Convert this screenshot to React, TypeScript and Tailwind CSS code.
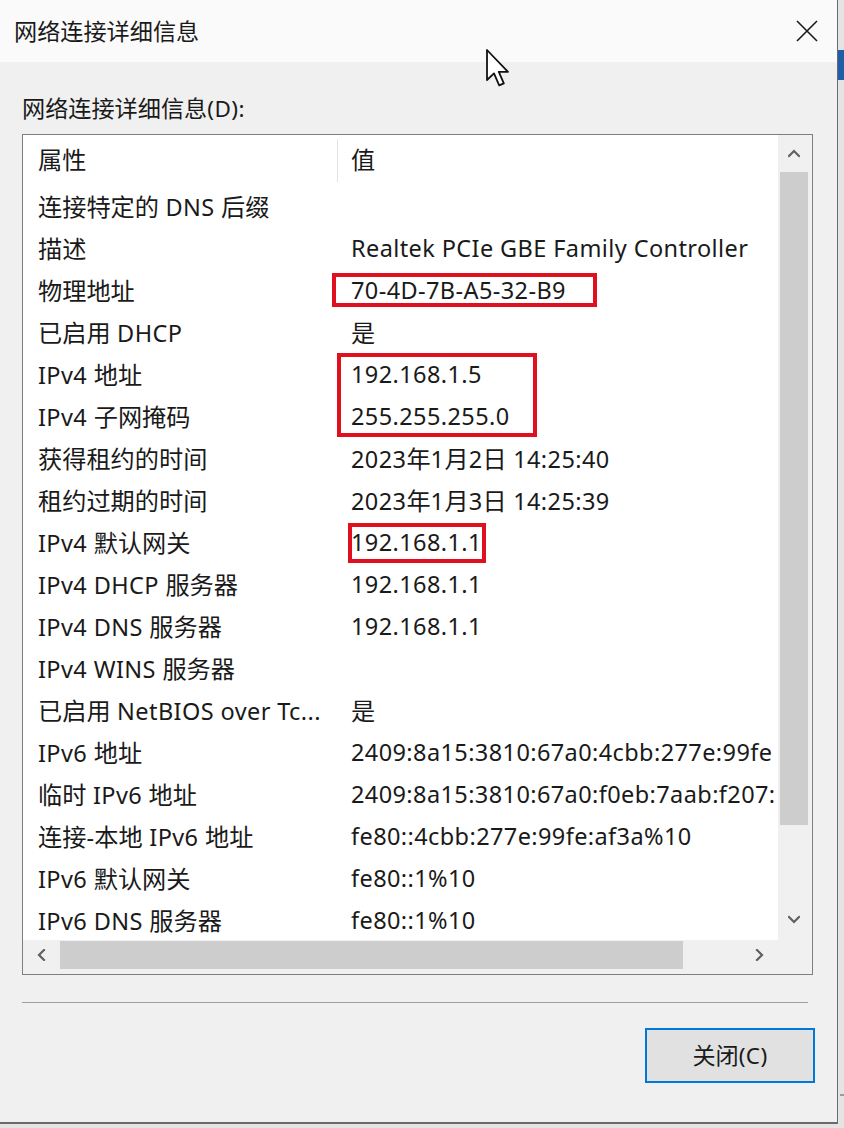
import React from 'react';

const rows: [string, string][] = [
    ['连接特定的 DNS 后缀', ''],
    ['描述', 'Realtek PCIe GBE Family Controller'],
    ['物理地址', '70-4D-7B-A5-32-B9'],
    ['已启用 DHCP', '是'],
    ['IPv4 地址', '192.168.1.5'],
    ['IPv4 子网掩码', '255.255.255.0'],
    ['获得租约的时间', '2023年1月2日 14:25:40'],
    ['租约过期的时间', '2023年1月3日 14:25:39'],
    ['IPv4 默认网关', '192.168.1.1'],
    ['IPv4 DHCP 服务器', '192.168.1.1'],
    ['IPv4 DNS 服务器', '192.168.1.1'],
    ['IPv4 WINS 服务器', ''],
    ['已启用 NetBIOS over Tc...', '是'],
    ['IPv6 地址', '2409:8a15:3810:67a0:4cbb:277e:99fe'],
    ['临时 IPv6 地址', '2409:8a15:3810:67a0:f0eb:7aab:f207:'],
    ['连接-本地 IPv6 地址', 'fe80::4cbb:277e:99fe:af3a%10'],
    ['IPv6 默认网关', 'fe80::1%10'],
    ['IPv6 DNS 服务器', 'fe80::1%10'],
];

// CJK glyphs in the screenshot run a bit larger than the latin ones
const T: React.FC<{ text: string }> = ({ text }) => {
    const parts = text.split(/([\u3000-\u9fff\uff00-\uffef]+)/);
    return (
        <>
            {parts.map((p, i) =>
                /[\u3000-\u9fff\uff00-\uffef]/.test(p) ? (
                    <span key={i} className="text-[1.03em] tracking-normal">{p}</span>
                ) : (
                    <span key={i}>{p}</span>
                )
            )}
        </>
    );
};

const Chevron: React.FC<{ dir: 'up' | 'down' | 'left' | 'right' }> = ({ dir }) => {
    const d = {
        up: 'M1 8 L6 3 L11 8',
        down: 'M1 3 L6 8 L11 3',
        left: 'M8 1 L3 6 L8 11',
        right: 'M3 1 L8 6 L3 11',
    }[dir];
    return (
        <svg width="12" height="12" viewBox="0 0 12 12" fill="none">
            <path d={d} stroke="#606060" strokeWidth="2.2" strokeLinecap="square" />
        </svg>
    );
};

const App: React.FC = () => {
    return (
        <div
            className="relative w-[844px] h-[1128px] overflow-hidden bg-[#e4e4e4] text-[#1a1a1a]"
            style={{ fontFamily: '"Noto Sans", "Noto Sans CJK SC", sans-serif' }}
        >
            {/* strip of the window behind */}
            <div className="absolute left-[838px] top-[50px] w-[6px] h-[30px] bg-[#1f5fa8]" />
            <div className="absolute left-[840px] top-[1094px] w-[4px] h-[2px] bg-[#9a9a9a]" />

            <div className="w-[838px] h-[1124px] flex flex-col bg-[#f0f0f0] border-r border-b-2 border-[#6b6b6b]">
                {/* Title bar */}
                <div className="h-[62px] shrink-0 bg-[#fafafa] flex items-center justify-between pl-[14px] pr-[19px]">
                    <span className="text-[22.5px] tracking-[0.5px]"><T text="网络连接详细信息" /></span>
                    <svg width="22" height="22" viewBox="0 0 22 22">
                        <path d="M1 1 L21 21 M21 1 L1 21" stroke="#1a1a1a" strokeWidth="1.6" />
                    </svg>
                </div>

                {/* Body */}
                <div className="flex flex-col pl-[22px]">
                    <div className="mt-[31px] h-[30px] leading-[30px] text-[22.5px] tracking-[0.4px]">
                        <T text="网络连接详细信息(D):" />
                    </div>

                    <div className="mt-[11px] w-[791px] h-[841px] border border-[#7e7e7e] bg-[#f0f0f0] flex flex-col">
                        <div className="flex h-[805px]">
                            {/* list content */}
                            <div className="w-[755px] h-[805px] bg-white overflow-hidden whitespace-nowrap text-[23.5px] tracking-[0.4px]">
                                <div className="flex h-[51px] items-center">
                                    <div className="w-[314px] pl-[15px]"><T text="属性" /></div>
                                    <div className="w-px h-[43px] bg-[#e3e3e3]" />
                                    <div className="pl-[13px]"><T text="值" /></div>
                                </div>
                                {rows.map(([k, v], i) => (
                                    <div key={i} className="flex h-[42px] items-center">
                                        <div className="w-[314px] shrink-0 pl-[15px] overflow-hidden"><T text={k} /></div>
                                        <div className="pl-[14px]"><T text={v} /></div>
                                    </div>
                                ))}
                            </div>
                            {/* vertical scrollbar */}
                            <div className="w-[31px] h-[805px] bg-[#f0f0f0] flex flex-col items-center">
                                <div className="h-[37px] flex items-center justify-center"><Chevron dir="up" /></div>
                                <div className="w-[28px] h-[653px] bg-[#cdcdcd]" />
                                <div className="flex-1 flex items-end justify-center pb-[14px]"><Chevron dir="down" /></div>
                            </div>
                        </div>
                        {/* horizontal scrollbar */}
                        <div className="flex h-[30px] w-[755px] items-center">
                            <div className="w-[37px] flex justify-center"><Chevron dir="left" /></div>
                            <div className="w-[623px] h-[28px] bg-[#cdcdcd]" />
                            <div className="flex-1 flex justify-end pr-[12px]"><Chevron dir="right" /></div>
                        </div>
                    </div>

                    <div className="mt-[27px] w-[786px] h-px bg-[#a0a0a0]" />

                    <div className="mt-[25px] self-end mr-[22px] w-[170px] h-[55px] border-2 border-[#0078d7] bg-[#e1e1e1] flex items-center justify-center text-[22.5px] tracking-[0.4px]">
                        <T text="关闭(C)" />
                    </div>
                </div>
            </div>

            {/* red annotation boxes */}
            <div className="absolute left-[332px] top-[273px] w-[265px] h-[34px] border-4 border-[#e0101e]" />
            <div className="absolute left-[337px] top-[353px] w-[200px] h-[84px] border-4 border-[#e0101e]" />
            <div className="absolute left-[348px] top-[523px] w-[138px] h-[40px] border-4 border-[#e0101e]" />

            {/* mouse pointer */}
            <svg className="absolute left-[486px] top-[49px]" width="24" height="38" viewBox="0 0 12 19">
                <path
                    d="M0.5 0.5 L0.5 15.5 L4 12.2 L6.6 18.2 L8.9 17.2 L6.4 11.4 L11 11.4 Z"
                    fill="white"
                    stroke="#111"
                    strokeWidth="0.9"
                    strokeLinejoin="round"
                />
            </svg>
        </div>
    );
};

export default App;
